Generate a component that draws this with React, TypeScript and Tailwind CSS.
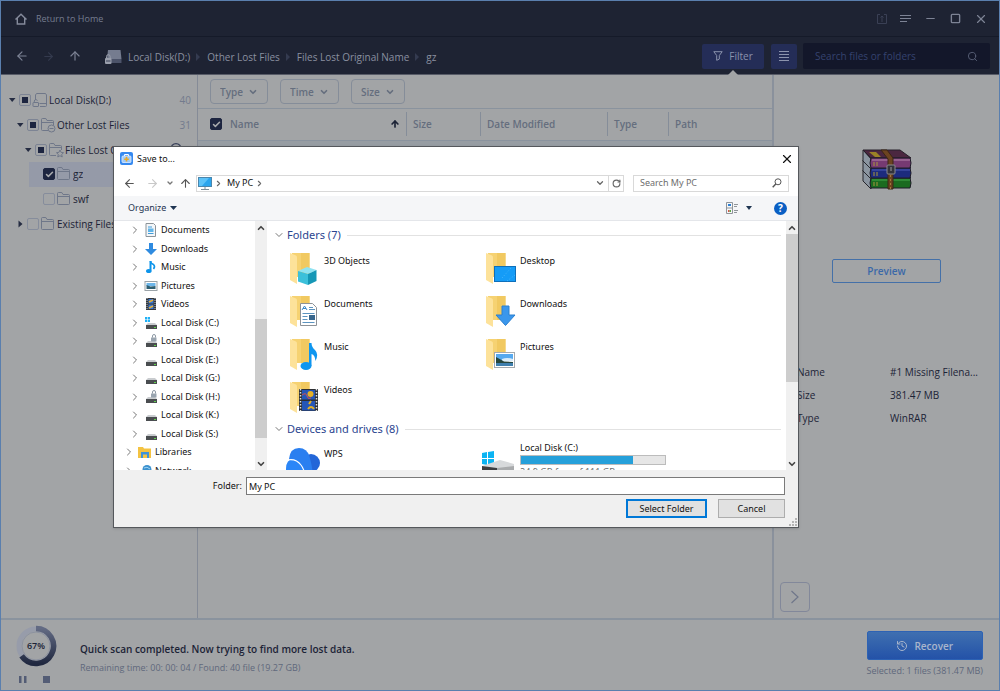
import type { ReactNode } from "react";
import {
  ArrowLeft,
  ArrowRight,
  ArrowUp,
  Check,
  ChevronDown,
  ChevronRight,
  ChevronUp,
  History,
  Minus,
  RotateCw,
  Search,
  Square,
  X,
} from "lucide-react";

/* ---------- main window icons ---------- */

function OutlineFolder({ badge }: { badge?: "minus" | "star" }) {
  return (
    <svg width="16" height="16" viewBox="0 0 16 16" fill="none" stroke="#6f7789" className="shrink-0">
      <path d="M8 13.500H2.500a1 1 0 0 1-1-1v-10a1 1 0 0 1 1-1h3.300l1.200 2h5.500a1 1 0 0 1 1 1V8M1.500 5.500h12" />
      {!badge && <path d="M8 13.500h4.500a1 1 0 0 0 1-1V8" />}
      {badge === "minus" && (
        <>
          <circle cx="11.500" cy="11.500" r="3.500" fill="#a2a4a6" />
          <path d="M9.500 11.500h4" />
        </>
      )}
      {badge === "star" && (
        <path fill="#a2a4a6" d="m12 8 1.100 2.400 2.400.3-1.800 1.700.5 2.600-2.200-1.300L9.800 15l.5-2.600-1.800-1.700 2.400-.3z" />
      )}
    </svg>
  );
}

function OutlineDisk() {
  return (
    <svg width="16" height="16" viewBox="0 0 16 16" fill="none" stroke="#6f7789" className="shrink-0">
      <path d="M3.500 8V3l1-1.500h9l1 1.500v10.500a1 1 0 0 1-1 1H8M7.500 11.500h7" />
      <rect x="1" y="10.500" width="5.500" height="4" rx=".5" />
      <path d="M2.300 10.300V9a1.600 1.600 0 0 1 3.100-.3" />
    </svg>
  );
}

function HomeIcon() {
  return (
    <svg width="12" height="12" viewBox="0 0 12 12" fill="none" stroke="#858b9c" strokeWidth="1.400">
      <path d="M.5 6.500L6 1.200l5.500 5.300M2.300 5v6h7.400V5" />
    </svg>
  );
}

function PreviewEye() {
  return (
    <svg width="12" height="14" viewBox="0 0 12 14" fill="none" stroke="#39415a" className="shrink-0">
      <circle cx="6" cy="6" r="5.300" strokeWidth="1.200" />
      <circle cx="6" cy="6" r="2.200" strokeWidth="1.400" />
    </svg>
  );
}

function HeaderDisk() {
  return (
    <svg width="17" height="16" viewBox="0 0 17 16" className="shrink-0">
      <path d="M3 1h12.500l1 9H2z" fill="#757c8f" />
      <path d="M2 10h14.500v4H2z" fill="#4c5369" />
      <rect x="0" y="9" width="6.500" height="6" rx="1" fill="#9a9fac" />
      <path d="M1.500 9V7.500a1.800 1.800 0 0 1 3.600 0V9" stroke="#9a9fac" fill="none" />
      <path d="M1 12h4.500" stroke="#3a4157" />
    </svg>
  );
}

function WinRarIcon() {
  return (
    <svg width="50" height="42" viewBox="0 0 50 42">
      {[
        { y: 21, top: "#1e4a20", face: "#1b6b20", hi: "#2f8a35" },
        { y: 11, top: "#1b2350", face: "#1c2b7d", hi: "#34439a" },
        { y: 1, top: "#4b2740", face: "#763a72", hi: "#96608f" },
      ].map((b) => (
        <g key={b.y}>
          <path d={`M1 ${b.y}L9 ${b.y + 9}V${b.y + 19}L1 ${b.y + 11}z`} fill="#8b95a0" stroke="#26262c" />
          <path d={`M1 ${b.y}H38L49 ${b.y + 8}H9z`} fill={b.top} stroke="#26202a" />
          <path d={`M9 ${b.y + 8}H48q2 5 0 10H9q-2-5 0-10z`} fill={b.face} stroke="#1f1c28" />
          <path d={`M10 ${b.y + 10}H48`} stroke={b.hi} strokeWidth="2" />
          <path d={`M12 ${b.y + 12}v4M15 ${b.y + 12}v4`} stroke="#a8963c" />
        </g>
      ))}
      <path d="M7 3h7l5 5h-6z" fill="#9a8226" />
      <path d="M19 1h6l6 8v31h-5V10z" fill="#6c4320" stroke="#3b2615" />
      <path d="M28.500 26v14" stroke="#a1783a" strokeDasharray="2 2" />
      <rect x="25" y="16" width="8" height="9" rx="1" fill="#33333b" stroke="#8b8b90" />
      <path d="M29 18v4" stroke="#9b9ba0" />
    </svg>
  );
}

function ProgressRing() {
  return (
    <svg width="44" height="44" viewBox="0 0 44 44" className="col-start-1 row-start-1">
      <defs>
        <linearGradient id="ring" x1="0" y1="0" x2="0" y2="1">
          <stop offset="0" stopColor="#626a83" />
          <stop offset="1" stopColor="#202840" />
        </linearGradient>
      </defs>
      <circle cx="22" cy="22" r="17" fill="none" stroke="#979caa" strokeWidth="5" />
      <circle cx="22" cy="22" r="14" fill="none" stroke="#8c92a0" />
      <path d="M22 4.500A17.500 17.500 0 1 1 7.600 31.900" fill="none" stroke="url(#ring)" strokeWidth="5.500" />
    </svg>
  );
}

/* ---------- dialog icons ---------- */

function AppIcon() {
  return (
    <svg width="13" height="13" viewBox="0 0 13 13" className="shrink-0">
      <rect width="13" height="13" rx="2" fill="#3689f0" />
      <path d="M4.500 4V2.500h4V4" fill="none" stroke="#fff" />
      <rect x="2" y="4" width="9" height="6.500" rx="1" fill="#9fcbfb" stroke="#e4f0fe" strokeWidth=".8" />
      <path d="M6.500 4.800v4.800M4.200 7.200h4.600" stroke="#e9a928" strokeWidth="1.600" />
    </svg>
  );
}

function Monitor() {
  return (
    <svg width="14" height="13" viewBox="0 0 14 13" className="shrink-0">
      <rect x=".5" y=".5" width="13" height="9" fill="#2aa5ee" stroke="#4b86ac" />
      <path d="M1 1h10L4 9H1z" fill="#5cc2f8" />
      <path d="M7 10v2M3 12.500h8" stroke="#7d8e99" />
    </svg>
  );
}

function Magnifier() {
  return (
    <svg width="10" height="10" viewBox="0 0 10 10" fill="none" stroke="#555" className="shrink-0">
      <circle cx="6" cy="3.800" r="3" />
      <path d="M3.800 6L.7 9.200" strokeWidth="1.400" />
    </svg>
  );
}

function TreeGlyph({ kind }: { kind: string }) {
  return (
    <svg width="14" height="14" viewBox="0 0 14 14" className="shrink-0">
      {kind === "doc" && (
        <>
          <path d="M2 .5h7.500l2 2v11H2z" fill="#f3f6f9" stroke="#8b9399" />
          <path d="M4 4h4M4 10.500h5.500" stroke="#3f9bd8" />
          <path d="M4 5.500h5.500v3.500H4z" fill="#62b5e8" />
        </>
      )}
      {kind === "down" && <path d="M5 1h4v6h4l-6 6-6-6h4z" fill="#2f8be0" />}
      {kind === "music" && (
        <>
          <path d="M6.500 1v9.500" stroke="#0d94ea" strokeWidth="2" />
          <path d="M6.500 1q0 2.500 3 3.500 2 2 0 4.500" fill="none" stroke="#0d94ea" strokeWidth="1.600" />
          <ellipse cx="4.800" cy="11" rx="2.800" ry="2" fill="#0d94ea" />
        </>
      )}
      {kind === "pic" && (
        <>
          <rect x="1" y="2.500" width="12" height="9" fill="#fff" stroke="#9aa3a8" />
          <path d="M2.500 4h9v3h-9z" fill="#6cb6ea" />
          <path d="M2.500 6l4 1.500 5-.5v3h-9z" fill="#2d5f73" />
        </>
      )}
      {kind === "video" && (
        <>
          <path d="M2 1h10v12H2z" fill="#33373c" />
          <path d="M4.500 2h5v4.500h-5zM4.500 7.500h5V12h-5z" fill="#3a77cf" />
          <path d="M5 5l4-2M5 11l4-2" stroke="#e6b13a" strokeWidth="1.500" />
          <path d="M3 1v12M11 1v12" stroke="#bfc5c9" strokeDasharray="1 1" />
        </>
      )}
      {(kind === "disk" || kind === "lock" || kind === "win") && (
        <>
          <path d="M4 7h7l2 2H2z" fill="#c9cccf" />
          <path d="M2 9h11v4H2z" fill="#4a4d50" />
          <path d="M10 11.500h2" stroke="#5fd24c" />
        </>
      )}
      {kind === "lock" && (
        <>
          <rect x="7" y="3.500" width="5.500" height="4" fill="#9aa5b0" />
          <path d="M8.500 3.500V2a1.500 1.500 0 0 1 3 0v1.500" fill="none" stroke="#8c98a4" />
        </>
      )}
      {kind === "win" && (
        <path d="M1 1h2.200v2.200H1zM3.800 1H6v2.200H3.800zM1 3.800h2.200V6H1zM3.800 3.800H6V6H3.800z" fill="#1fb0f5" />
      )}
      {kind === "lib" && (
        <>
          <path d="M0 2h5l1 1.500h7V13H0z" fill="#f4c342" />
          <path d="M3 7h8v6H9V9.500H5V13H3z" fill="#3f93d8" />
        </>
      )}
      {kind === "net" && (
        <>
          <circle cx="9" cy="5.500" r="4.500" fill="#3c92cf" />
          <path d="M6 4q3-2 6 1M8 8q2-1 3 0" stroke="#9fd3f3" fill="none" />
          <path d="M0 7h9v6H0z" fill="#4da6df" />
        </>
      )}
    </svg>
  );
}

function FolderIcon({ kind }: { kind: string }) {
  return (
    <svg width="35" height="34" viewBox="0 0 35 34" className="shrink-0">
      <path d="M3 1h17.500v24H3z" fill="#f6d272" />
      <path d="M12 1h8.500v24H12z" fill="#f1c961" />
      <path d="M1 1l6 2.500q1 .5 1 2V32l-7-4z" fill="#fde29a" />
      {kind === "cube" && (
        <>
          <path d="M9 19l9-4 9.500 3-8.500 4z" fill="#8fe3f2" />
          <path d="M9 19l10 3v11l-10-3.500z" fill="#3cc0da" />
          <path d="M19 22l8.500-4v11L19 33z" fill="#1597b6" />
        </>
      )}
      {kind === "desktop" && (
        <>
          <rect x="9.500" y="14.500" width="21" height="15" fill="#159cf7" stroke="#0e6fba" />
          <path d="M17 26l9-10M22 29l8-6" stroke="#48b6fb" strokeDasharray="1 2" />
        </>
      )}
      {kind === "doc" && (
        <>
          <path d="M11.500 8.500h12l4 4v18h-16z" fill="#fff" stroke="#8d9297" />
          <path d="M13 15l2.500-4 2.500 4M14 13.500h3" fill="none" stroke="#3b88c8" />
          <path d="M20 12.500h4M20 14.500h6M13.500 18.500h12M13.500 21.500h5M13.500 24.500h5M13.500 27.500h12" stroke="#5c94c0" />
          <path d="M20 20h6v5h-6z" fill="#37668d" />
        </>
      )}
      {kind === "down" && <path d="M17 11h7v9h6l-9.500 10.500L11 20h6z" fill="#3b97ec" stroke="#2c80cf" />}
      {kind === "music" && (
        <>
          <path d="M20 5h2.500q0 4 3.500 7 4 4 .5 11-.5-6-4-7v12H20z" fill="#0e96f0" />
          <ellipse cx="17" cy="28" rx="5.500" ry="4" fill="#0e96f0" />
        </>
      )}
      {kind === "pic" && (
        <>
          <rect x="9.500" y="14.500" width="20" height="15" fill="#fff" stroke="#a4a9ad" />
          <path d="M11 16h17v7H11z" fill="#56a9ef" />
          <path d="M17 21q5-2 11 0v2H17z" fill="#d9ecfa" />
          <path d="M11 19q6 3 8 4.500l9 .5v1H11z" fill="#26463c" />
          <path d="M11 25h17v3H11z" fill="#3f7fae" />
        </>
      )}
      {kind === "video" && (
        <>
          <path d="M10 8h19v22H10z" fill="#2d2f33" />
          <path d="M13 9h13v9.500H13zM13 20h13v9.500H13z" fill="#2556b8" />
          <circle cx="21.500" cy="13" r="3" fill="#e6b126" />
          <path d="M13 14q4-3 5 1t4 2" stroke="#d9534a" fill="none" />
          <path d="M22 20l-2 3M19 28q3-4 6 0" stroke="#e6b126" strokeWidth="2" fill="none" />
          <path d="M11.500 8v22M27.500 8v22" stroke="#dfe2e4" strokeWidth="1.500" strokeDasharray="1.500 1.500" />
        </>
      )}
    </svg>
  );
}

function WpsIcon() {
  return (
    <svg width="36" height="28" viewBox="0 0 36 28" className="shrink-0">
      <circle cx="26" cy="16" r="9" fill="#2366d8" />
      <path d="M4 12Q5 1 14 1q8 0 10.500 8.500Q27 18 28 28H8z" fill="#2a7ff0" />
      <path d="M1 22q0-10 8-10 7 0 10 16H1z" fill="#2b86f7" />
      <path d="M2 13q9-2 14 5 3 4 4 10" fill="none" stroke="#fff" strokeWidth="1.200" />
    </svg>
  );
}

function WindowsDrive() {
  return (
    <svg width="35" height="28" viewBox="0 0 35 28" className="shrink-0">
      <path d="M1 2l5-1v6H1zM7 1l6-1v7H7zM1 8h5v6l-5-1zM7 8h6v7l-6-1z" fill="#0bb4f3" />
      <path d="M1 15l18-6 14 4v3l-17 2z" fill="#d7d9db" />
      <path d="M1 15l15 2v6L1 20z" fill="#3c3e41" />
      <path d="M16 17l17-2v6l-17 3z" fill="#a9abad" />
    </svg>
  );
}

/* ---------- data ---------- */

const scanTree = [
  { label: "Local Disk(D:)", pad: "pl-[7px]", caret: "down", state: "mixed", icon: <OutlineDisk />, count: "40" },
  { label: "Other Lost Files", pad: "pl-[15px]", caret: "down", state: "mixed", icon: <OutlineFolder badge="minus" />, count: "31" },
  { label: "Files Lost Original Name", pad: "pl-[23px]", caret: "down", state: "mixed", icon: <OutlineFolder badge="star" />, count: "2" },
  { label: "gz", pad: "pl-[31px]", caret: "", state: "on", icon: <OutlineFolder /> },
  { label: "swf", pad: "pl-[31px]", caret: "", state: "off", icon: <OutlineFolder /> },
  { label: "Existing Files", pad: "pl-[15px]", caret: "right", state: "off", icon: <OutlineFolder /> },
];

const dialogTree = [
  ["Documents", "doc"],
  ["Downloads", "down"],
  ["Music", "music"],
  ["Pictures", "pic"],
  ["Videos", "video"],
  ["Local Disk (C:)", "win"],
  ["Local Disk (D:)", "lock"],
  ["Local Disk (E:)", "disk"],
  ["Local Disk (G:)", "disk"],
  ["Local Disk (H:)", "lock"],
  ["Local Disk (K:)", "disk"],
  ["Local Disk (S:)", "disk"],
  ["Libraries", "lib"],
  ["Network", "net"],
];

const folders = [
  ["3D Objects", "cube"],
  ["Desktop", "desktop"],
  ["Documents", "doc"],
  ["Downloads", "down"],
  ["Music", "music"],
  ["Pictures", "pic"],
  ["Videos", "video"],
];

/* ---------- parts ---------- */

function TreeCheck({ state, label }: { state: string; label: string }) {
  if (state === "mixed") {
    return (
      <input
        type="checkbox"
        aria-label={label}
        ref={(el) => {
          if (el) el.indeterminate = true;
        }}
        className="size-3 shrink-0 appearance-none rounded-xs border border-[#7d8494] bg-[#1d2540] bg-clip-content p-[2px]"
      />
    );
  }
  return (
    <span className="grid shrink-0 place-items-center">
      <input
        type="checkbox"
        aria-label={label}
        defaultChecked={state === "on"}
        className="peer col-start-1 row-start-1 size-3 appearance-none rounded-xs border border-[#868d9c] checked:border-[#1d2540] checked:bg-[#1d2540]"
      />
      <Check size={9} strokeWidth={4} className="pointer-events-none col-start-1 row-start-1 hidden text-[#a9abae] peer-checked:block" />
    </span>
  );
}

function Caret({ dir }: { dir: string }) {
  return (
    <svg width="8" height="8" viewBox="0 0 8 8" fill="#252c42" className="shrink-0">
      {dir === "down" && <path d="M1 2h6.500L4.200 6z" />}
      {dir === "right" && <path d="M2.500.5v7l4-3.500z" />}
    </svg>
  );
}

function FilterSelect({ label }: { label: string }) {
  return (
    <label className="flex h-[25px] items-center gap-[5px] rounded-sm border border-[#858d99] pr-[9px] pl-[9px] text-[#656e7e]">
      <select aria-label={label} className="appearance-none font-semibold outline-none">
        <option>{label}</option>
      </select>
      <ChevronDown size={10} strokeWidth={4} />
    </label>
  );
}

function Crumb({ children }: { children: string }) {
  return (
    <>
      <svg width="5" height="8" viewBox="0 0 5 8" fill="#343b50">
        <path d="M0 0l4 4-4 4z" />
      </svg>
      <a href="#">{children}</a>
    </>
  );
}

function ScrollBar({ before, thumb }: { before: string; thumb: string }) {
  return (
    <div className="flex w-3 shrink-0 flex-col items-center bg-[#f0f0f0] text-[#444]">
      <ChevronUp size={10} strokeWidth={4} className="mt-[2px] mb-px shrink-0" />
      <div className={before} />
      <div className={`w-full bg-[#cdcdcd] ${thumb}`} />
      <ChevronDown size={10} strokeWidth={4} className="mt-auto mb-px shrink-0" />
    </div>
  );
}

function GroupHeading({ children }: { children: ReactNode }) {
  return (
    <h2 className="flex items-center gap-[2px] text-[11px] leading-4 text-[#2b4590]">
      <ChevronDown size={12} strokeWidth={2} className="shrink-0 text-[#777]" />
      {children}
      <span className="ml-1 h-px flex-1 bg-[#e2e2e2]" />
    </h2>
  );
}

function SaveDialog() {
  return (
    <div
      role="dialog"
      aria-label="Save to..."
      className="absolute top-[145px] left-[112px] flex w-[686px] flex-col border border-[#55585c] bg-white font-['Noto_Sans','Open_Sans',sans-serif] text-[9px] leading-[14px] text-[#111] shadow-sm"
    >
      <div className="flex h-[23px] items-center gap-1 pr-1 pl-[6px]">
        <AppIcon />
        <span>Save to...</span>
        <button type="button" aria-label="Close" className="ml-auto">
          <X size={14} strokeWidth={2} />
        </button>
      </div>

      <div className="flex h-[26px] items-center pr-[9px] pl-[9px]">
        <button type="button" aria-label="Back" className="mr-[10px] text-[#555]">
          <ArrowLeft size={13} strokeWidth={2} />
        </button>
        <button type="button" aria-label="Forward" className="mr-[7px] text-[#c8c8c8]">
          <ArrowRight size={13} strokeWidth={2} />
        </button>
        <button type="button" aria-label="Recent locations" className="mr-[5px] text-[#777]">
          <ChevronDown size={8} strokeWidth={4} />
        </button>
        <button type="button" aria-label="Up" className="mr-1 text-[#555]">
          <ArrowUp size={13} strokeWidth={2} />
        </button>
        <div className="flex h-[17px] flex-1 items-center border border-[#d9d9d9] pl-px">
          <Monitor />
          <ChevronRight size={9} strokeWidth={3} className="mx-[2px] text-[#666]" />
          <button type="button" className="px-[2px]">
            My PC
          </button>
          <ChevronRight size={9} strokeWidth={3} className="text-[#666]" />
          <button type="button" aria-label="Previous locations" className="mr-[3px] ml-auto text-[#666]">
            <ChevronDown size={10} strokeWidth={3} />
          </button>
          <button type="button" aria-label="Refresh" className="flex h-full w-[15px] items-center justify-center border-l border-[#d9d9d9] text-[#666]">
            <RotateCw size={9} strokeWidth={3} />
          </button>
        </div>
        <div className="ml-[9px] flex h-[17px] w-[156px] items-center border border-[#d9d9d9] pr-[6px] pl-[6px]">
          <input type="search" aria-label="Search My PC" placeholder="Search My PC" className="w-full min-w-0 outline-none placeholder:text-[#6d6d6d]" />
          <Magnifier />
        </div>
      </div>

      <div className="flex h-[25px] items-center border-b border-[#e4e6ea] bg-[#f5f6f8] pr-[11px] pl-[14px]">
        <button type="button" className="flex items-center gap-1 text-[#1f3552]">
          Organize
          <svg width="7" height="4" viewBox="0 0 7 4" fill="#1f3552">
            <path d="M0 0h7L3.500 4z" />
          </svg>
        </button>
        <button type="button" aria-label="Change view" className="ml-auto flex items-center gap-2">
          <svg width="12" height="12" viewBox="0 0 12 12" fill="none" stroke="#90959a">
            <path d="M.5.5h6v11h-6zM.5 6h6M8 2.500h4M8 4.500h3M8 8.500h4M8 10.500h3" />
            <path d="M2 2h3v2H2z" fill="#2c7fd3" stroke="none" />
            <path d="M2 8h1.500v2H2z" fill="#d9534a" stroke="none" />
            <path d="M3.500 8H5v2H3.500z" fill="#5aa845" stroke="none" />
          </svg>
          <svg width="6" height="4" viewBox="0 0 6 4" fill="#1f3552">
            <path d="M0 0h6L3 4z" />
          </svg>
        </button>
        <button type="button" aria-label="Help" className="ml-[22px] flex size-[13px] items-center justify-center rounded-full bg-[#0a5fc4] text-[10px] font-bold text-white">
          ?
        </button>
      </div>

      <div className="flex h-[249px]">
        <div className="w-[141px] overflow-hidden">
          <ul className="grid h-[259px] auto-rows-fr">
            {dialogTree.map(([label, kind]) => (
              <li key={label} className={`flex items-center ${kind === "lib" || kind === "net" ? "pl-[9px]" : "pl-[15px]"}`}>
                <ChevronRight size={12} strokeWidth={2} className="mr-[3px] shrink-0 text-[#777]" />
                <TreeGlyph kind={kind} />
                <span className="ml-[3px]">{label}</span>
              </li>
            ))}
          </ul>
        </div>
        <ScrollBar before="h-[85px] shrink-0" thumb="h-[119px] shrink-0" />

        <div className="flex min-w-0 flex-1 flex-col overflow-hidden pr-[5px] pl-[6px]">
          <div className="pt-[6px] pb-[6px]">
            <GroupHeading>Folders (7)</GroupHeading>
          </div>
          <div className="grid auto-rows-[43px] grid-cols-[196px_196px] pl-4">
            {folders.map(([label, kind]) => (
              <a href="#" key={label} className="flex items-start pt-[3px]">
                <FolderIcon kind={kind} />
                <span className="pt-[2px]">{label}</span>
              </a>
            ))}
          </div>
          <GroupHeading>Devices and drives (8)</GroupHeading>
          <div className="grid grid-cols-[196px_196px] pt-1 pl-3">
            <a href="#" className="flex items-start gap-[3px] pt-[6px]">
              <WpsIcon />
              <span>WPS</span>
            </a>
            <a href="#" className="flex items-start gap-1">
              <div className="pt-[10px]">
                <WindowsDrive />
              </div>
              <div className="w-[146px] shrink-0">
                <span className="block">Local Disk (C:)</span>
                <div className="h-[10px] border border-[#bcbcbc] bg-[#e6e6e6]">
                  <div className="h-full w-[78%] bg-[#26a0da]" />
                </div>
                <span className="block text-[#6d6d6d]">24.9 GB free of 111 GB</span>
              </div>
            </a>
          </div>
        </div>
        <ScrollBar before="h-0" thumb="h-[148px] shrink-0" />
      </div>

      <div className="flex flex-col bg-[#f0f0f0] pt-[7px] pr-[13px] pb-[9px]">
        <div className="flex items-center gap-1">
          <label htmlFor="folder" className="w-32 text-right">
            Folder:
          </label>
          <input id="folder" type="text" defaultValue="My PC" className="h-[18px] min-w-0 flex-1 border border-[#7a7a7a] bg-white px-[2px] outline-none" />
        </div>
        <div className="mt-1 flex justify-end gap-[11px]">
          <button type="button" className="flex h-[19px] w-[81px] items-center justify-center border-2 border-[#0078d7] bg-[#e1e1e1]">
            Select Folder
          </button>
          <button type="button" className="flex h-[19px] w-[67px] items-center justify-center border border-[#adadad] bg-[#e1e1e1]">
            Cancel
          </button>
        </div>
      </div>
      <svg width="8" height="8" viewBox="0 0 8 8" fill="#b5b5b5" className="absolute right-px bottom-px">
        <path d="M6 0h2v2H6zM3 3h2v2H3zM6 3h2v2H6zM0 6h2v2H0zM3 6h2v2H3zM6 6h2v2H6z" />
      </svg>
    </div>
  );
}

export default function App() {
  return (
    <div className="relative flex min-h-screen flex-col border border-[#5a7fae] bg-[#a2a4a6] font-['Open_Sans','Noto_Sans',sans-serif] text-[10px] leading-4 text-[#1c2336]">
      <header className="border-b border-[#585c68] bg-[#1e2333] text-[#7d8395]">
        <div className="flex h-9 items-center border-b border-[#151a29] pr-[11px] pl-[14px] text-[9px]">
          <a href="#" className="flex items-center gap-[9px] text-[#757c8f]">
            <HomeIcon />
            Return to Home
          </a>
          <div className="ml-auto flex items-center gap-[13px] text-[#7d8395]">
            <svg width="10" height="10" viewBox="0 0 10 10" fill="none" stroke="#3a4055">
              <path d="M3 .5H.5v9h9v-9H7M5 8V2M3.500 3.500L5 2l1.500 1.500" />
            </svg>
            <button type="button" aria-label="Menu">
              <svg width="11" height="10" viewBox="0 0 11 10" stroke="currentColor">
                <path d="M0 1.500h11M0 4.500h11M0 7.500h7" />
              </svg>
            </button>
            <button type="button" aria-label="Minimize">
              <Minus size={13} strokeWidth={2} />
            </button>
            <button type="button" aria-label="Maximize">
              <Square size={11} strokeWidth={3} />
            </button>
            <button type="button" aria-label="Close window">
              <X size={14} strokeWidth={2} />
            </button>
          </div>
        </div>

        <div className="flex h-[37px] items-center pt-px pr-[9px] pl-[14px]">
          <div className="flex items-center gap-[13px]">
            <button type="button" aria-label="Back">
              <ArrowLeft size={14} strokeWidth={2} />
            </button>
            <button type="button" aria-label="Forward" className="text-[#343a4e]">
              <ArrowRight size={13} strokeWidth={2} />
            </button>
            <button type="button" aria-label="Up">
              <ArrowUp size={14} strokeWidth={2} />
            </button>
          </div>
          <nav className="ml-[23px] flex items-center gap-[6px] pt-[2px] whitespace-nowrap text-[#8a90a0]">
            <HeaderDisk />
            <a href="#">Local Disk(D:)</a>
            <Crumb>Other Lost Files</Crumb>
            <Crumb>Files Lost Original Name</Crumb>
            <Crumb>gz</Crumb>
          </nav>
          <button type="button" className="relative ml-auto flex h-[25px] w-[62px] items-center justify-center gap-[6px] rounded-xs bg-[#242d57] text-[#8b93ad]">
            <svg width="10" height="10" viewBox="0 0 10 10" fill="none" stroke="currentColor">
              <path d="M.8.7h8.400L6.300 4.500v3.600L3.700 9.300V4.500z" />
            </svg>
            Filter
            <svg width="10" height="5" viewBox="0 0 10 5" fill="#a2a4a6" className="absolute -bottom-[6px] left-[26px]">
              <path d="M0 5l5-5 5 5z" />
            </svg>
          </button>
          <button type="button" aria-label="List view" className="ml-[7px] flex h-[25px] w-[26px] items-center justify-center rounded-xs bg-[#242d57] text-[#8b93ad]">
            <svg width="10" height="10" viewBox="0 0 10 10" stroke="currentColor">
              <path d="M0 .5h10M0 3.500h10M0 6.500h10M0 9.500h10" />
            </svg>
          </button>
          <div className="ml-[6px] flex h-[26px] w-[187px] items-center rounded-xs bg-[#13172a] pr-3 pl-3">
            <input type="search" aria-label="Search files or folders" placeholder="Search files or folders" className="w-full min-w-0 outline-none placeholder:text-[#35436f]" />
            <Search size={11} strokeWidth={2} className="shrink-0 text-[#5a6178]" />
          </div>
        </div>
      </header>

      <main className="flex flex-1">
        <aside className="w-[197px] shrink-0 border-r border-[#858b97] pt-[13px]">
          <ul className="grid h-[148px] auto-rows-fr grid-cols-1">
            {scanTree.map((row) => (
              <li
                key={row.label}
                className={`flex items-center pr-[6px] whitespace-nowrap ${row.pad} ${row.label === "gz" ? "bg-linear-to-r from-transparent from-[28px] to-[#959aa8] to-[28px]" : ""}`}
              >
                <Caret dir={row.caret} />
                <span className="ml-[3px] flex min-w-0 items-center gap-px">
                  <TreeCheck state={row.state} label={row.label} />
                  {row.icon}
                  <span className="overflow-hidden text-ellipsis">{row.label}</span>
                </span>
                {row.label.startsWith("Files") && <PreviewEye />}
                {row.count && <span className="ml-auto pl-[3px] text-[#737b8d]">{row.count}</span>}
              </li>
            ))}
          </ul>
        </aside>

        <section className="min-w-0 flex-1 border-r-2 border-[#8a919c]">
          <div className="flex h-[34px] items-center gap-3 border-b border-[#8a939e] pl-3">
            <FilterSelect label="Type" />
            <FilterSelect label="Time" />
            <FilterSelect label="Size" />
          </div>
          <table className="w-full table-fixed border-collapse text-left text-[#656e7e]">
            <thead>
              <tr className="h-[31px] border-b border-[#8a939e]">
                <th className="w-[208px] font-semibold">
                  <span className="flex items-center pr-[6px] pl-3">
                    <TreeCheck state="on" label="Select all" />
                    <span className="ml-2">Name</span>
                    <ArrowUp size={10} strokeWidth={4} className="ml-auto text-[#1c2336]" />
                  </span>
                </th>
                <th className="w-[74px] font-semibold">
                  <span className="flex h-6 items-center border-l border-[#858d99] pl-[6px]">Size</span>
                </th>
                <th className="w-[127px] font-semibold">
                  <span className="flex h-6 items-center border-l border-[#858d99] pl-[6px]">Date Modified</span>
                </th>
                <th className="w-[61px] font-semibold">
                  <span className="flex h-6 items-center border-l border-[#858d99] pl-[6px]">Type</span>
                </th>
                <th className="font-semibold">
                  <span className="flex h-6 items-center border-l border-[#858d99] pl-[6px]">Path</span>
                </th>
              </tr>
            </thead>
            <tbody>
              <tr className="h-6 bg-[#979da3]">
                <td colSpan={5} />
              </tr>
            </tbody>
          </table>
        </section>

        <aside className="flex w-[225px] shrink-0 flex-col pt-[74px]">
          <div className="flex justify-center">
            <WinRarIcon />
          </div>
          <button type="button" className="mx-auto mt-[68px] h-6 w-[109px] rounded-xs border border-[#4470a8] font-semibold text-[#3a68a8]">
            Preview
          </button>
          <dl className="mt-[81px] grid grid-cols-[93px_1fr] gap-y-[7px] pl-[23px] whitespace-nowrap">
            <dt>Name</dt>
            <dd>#1 Missing Filena...</dd>
            <dt>Size</dt>
            <dd>381.47 MB</dd>
            <dt>Type</dt>
            <dd>WinRAR</dd>
          </dl>
          <button type="button" aria-label="Collapse panel" className="mt-auto mb-[6px] ml-[6px] flex size-[30px] items-center justify-center rounded-sm border border-[#82889a] text-[#6f768a]">
            <svg width="10" height="14" viewBox="0 0 10 14" fill="none" stroke="currentColor" strokeWidth="1.200">
              <path d="M1.500 1l6.500 6-6.500 6" />
            </svg>
          </button>
        </aside>
      </main>

      <footer className="flex h-[72px] items-center border-t-2 border-[#8a939e] pr-4 pl-[13px]">
        <div className="flex flex-col items-center pb-1">
          <div className="grid place-items-center">
            <ProgressRing />
            <span className="col-start-1 row-start-1 text-[9px] font-semibold">67%</span>
          </div>
          <div className="mt-2 flex gap-4 pr-1 text-[#535c75]">
            <button type="button" aria-label="Pause">
              <svg width="8" height="7" viewBox="0 0 8 7" fill="currentColor">
                <path d="M0 0h2.500v7H0zM5 0h2.500v7H5z" />
              </svg>
            </button>
            <button type="button" aria-label="Stop">
              <svg width="7" height="7" viewBox="0 0 7 7" fill="currentColor">
                <path d="M0 0h7v7H0z" />
              </svg>
            </button>
          </div>
        </div>
        <div className="ml-[22px] pt-[6px]">
          <p className="font-semibold">Quick scan completed. Now trying to find more lost data.</p>
          <p className="mt-[3px] text-[9px] text-[#5f687c]">Remaining time: 00: 00: 04 / Found: 40 file (19.27 GB)</p>
        </div>
        <div className="ml-auto flex flex-col items-center">
          <button
            type="button"
            className="flex h-[29px] w-[116px] items-center justify-center gap-[6px] rounded-xs border border-[#2d62b4] bg-linear-to-b from-[#3f6fb0] to-[#2452a8] font-semibold text-[#a9b6cc]"
          >
            <History size={12} strokeWidth={2} />
            Recover
          </button>
          <span className="mt-[3px] text-[9px] text-[#5f687c]">Selected: 1 files (381.47 MB)</span>
        </div>
      </footer>

      <SaveDialog />
    </div>
  );
}
